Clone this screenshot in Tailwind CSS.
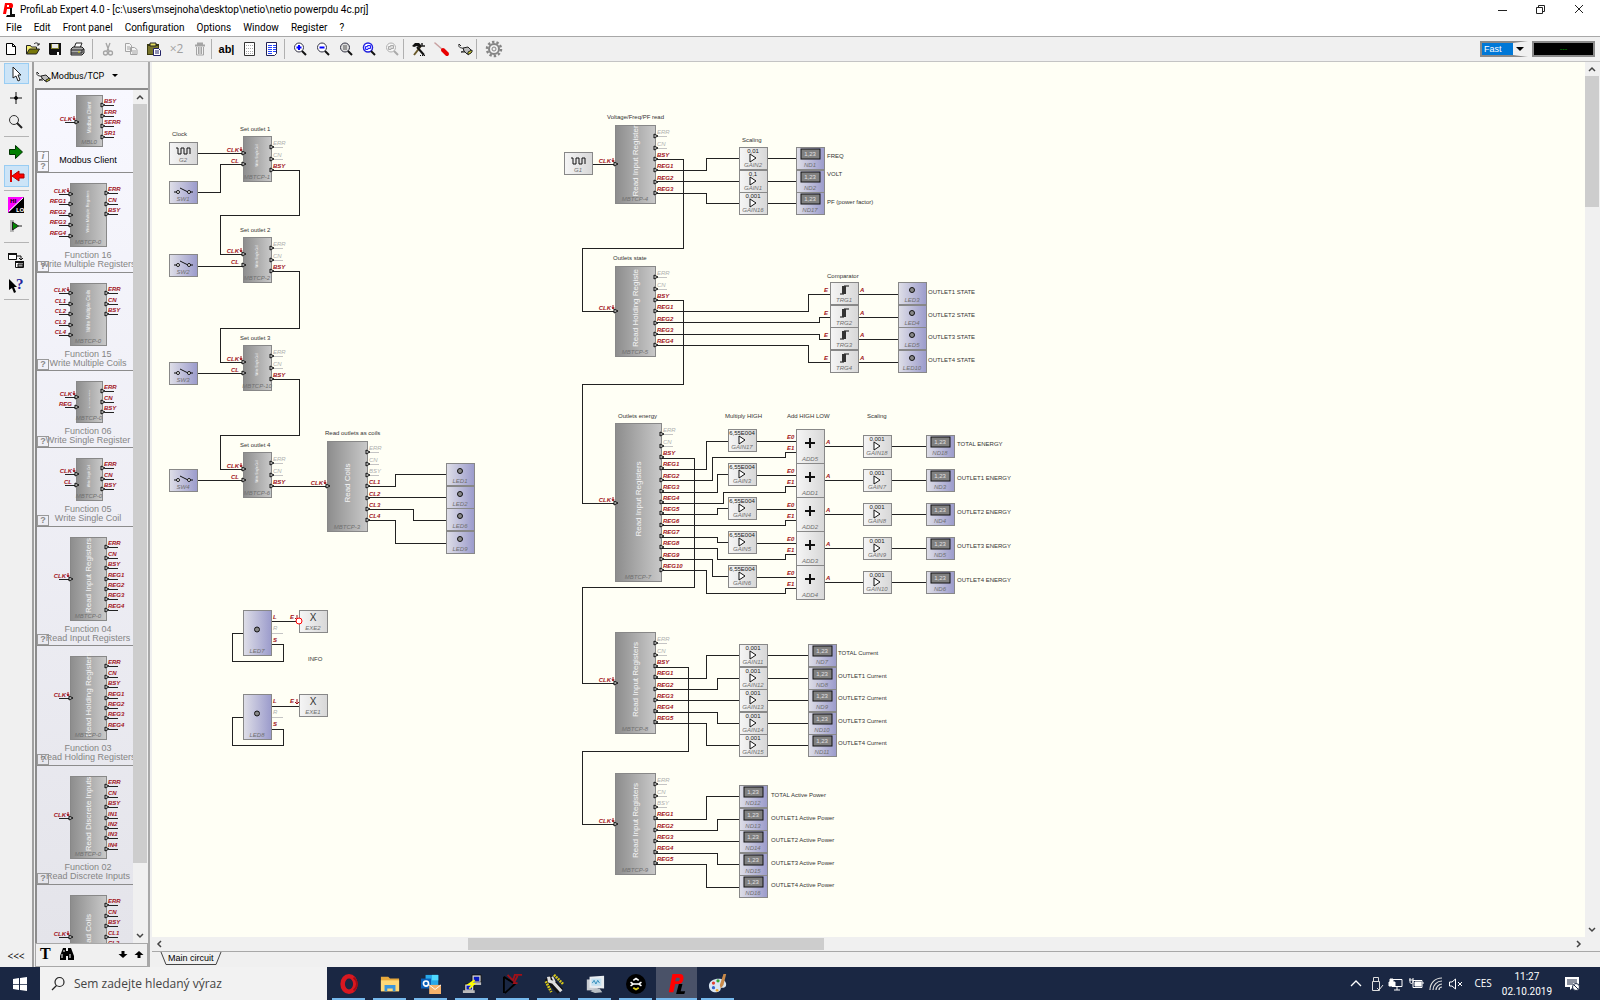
<!DOCTYPE html>
<html lang="cs">
<head>
    <meta charset="UTF-8">
    <meta name="viewport" content="width=device-width, initial-scale=1.0">
    <title>ProfiLab Expert 4.0</title>
    <script src="https://cdn.jsdelivr.net/npm/@tailwindcss/browser@4"></script>
</head>
<body class="h-screen flex flex-col overflow-hidden bg-[#f0f0f0] text-black text-xs font-['Open_Sans',sans-serif]">

    <!-- title bar -->
    <header class="bg-white h-[19px] flex items-center shrink-0">
        <svg class="w-4 h-4 ml-px" viewBox="0 0 16 16"><path fill-rule="evenodd" d="M4 1h6c3 0 3 6-1 6H6l-1 5H2zM6 3v2h2V3z" fill="#f00"/><path d="M9 6h2v6h3v3H5l1-2h3z" fill="#111"/></svg>
        <h1 class="ml-[3px] whitespace-nowrap text-[10px] font-['Roboto',sans-serif]">ProfiLab Expert 4.0 - [c:\users\msejnoha\desktop\netio\netio powerpdu 4c.prj]</h1>
        <div class="ml-auto flex">
            <button aria-label="Minimize" class="w-[38px] flex justify-center"><svg class="w-3 h-3" viewBox="0 0 12 12" fill="none" stroke="#222"><path d="M1 6.500h9"/></svg></button>
            <button aria-label="Restore" class="w-[38px] flex justify-center"><svg class="w-3 h-3" viewBox="0 0 12 12" fill="none" stroke="#222"><path d="M1.500 3.500h6v6h-6zM3.500 3.500v-2h6v6h-2"/></svg></button>
            <button aria-label="Close" class="w-[38px] mr-0.5 flex justify-center"><svg class="w-3 h-3" viewBox="0 0 12 12" fill="none" stroke="#222"><path d="M2 1l8 8M10 1l-8 8"/></svg></button>
        </div>
    </header>

    <nav class="bg-white h-[17px] flex items-center gap-3 pl-1.5 shrink-0 text-[10px] font-['Roboto',sans-serif]">
        <button>File</button><button>Edit</button><button>Front panel</button><button>Configuration</button><button>Options</button><button>Window</button><button>Register</button><button>?</button>
    </nav>

    <!-- toolbar -->
    <div class="h-[26px] flex items-center shrink-0 border-t border-[#a8a8a8] border-b border-b-[#c4c4c4]">
        <button aria-label="New" class="w-[22px] flex justify-center"><svg class="w-4 h-4" viewBox="0 0 16 16" fill="#fff" stroke="#000"><path d="M3.500 2.500h6l3 3v8h-9zM9.500 2.500v3h3"/></svg></button>
        <button aria-label="Open" class="w-[22px] flex justify-center"><svg class="w-4 h-4" viewBox="0 0 16 16" stroke="#222"><path d="M1.500 13V4.500h4l1 1.500h5v2" fill="#f4ee70"/><path d="M1.500 13l3-5h10l-3 5z" fill="#77770a"/><path d="M9 3c2-2 4-1 5 1m0-2v2h-2" fill="none"/></svg></button>
        <button aria-label="Save" class="w-[22px] flex justify-center"><svg class="w-4 h-4" viewBox="0 0 16 16"><path d="M2 2h12v12H3l-1-1z" fill="#111"/><path d="M4 3h8v5H4z" fill="#80802a"/><path d="M5 3h6v4H5z" fill="#e8e8e8"/><path d="M5 10h7v4H5z" fill="#111"/><path d="M10 11h2v3h-2z" fill="#fff"/></svg></button>
        <button aria-label="Print" class="w-[22px] flex justify-center"><svg class="w-4 h-4" viewBox="0 0 16 16" stroke="#222"><path d="M5 7l2-5h6l-2 5z" fill="#fff"/><path d="M2 8l2-2h9l2 2v4l-2 2H2z" fill="#aaa"/><path d="M2 9h11v3H2M13 9l2-1" fill="none"/><path d="M9 11h2" stroke="#dd0"/></svg></button>
        <span class="ml-1 w-1 h-5 border-l border-[#b0b0b0]"></span>
        <button aria-label="Cut" class="w-[23px] flex justify-center"><svg class="w-4 h-4" viewBox="0 0 16 16" fill="none" stroke="#a4a4a4" stroke-width="1.300"><path d="M6 2l3 8M10 2L7 10"/><circle cx="5.500" cy="12" r="2"/><circle cx="10.500" cy="12" r="2"/></svg></button>
        <button aria-label="Copy" class="w-[23px] flex justify-center"><svg class="w-4 h-4" viewBox="0 0 16 16" fill="#f4f4f4" stroke="#a4a4a4"><path d="M2.500 2.500h4l2 2v6h-6zM7.500 6.500h4l2.500 2v5h-6.500zM4 6h3M4 8h3M9 10h4M9 12h4"/></svg></button>
        <button aria-label="Paste" class="w-[23px] flex justify-center"><svg class="w-4 h-4" viewBox="0 0 16 16"><path d="M1 3h12v11H1z" fill="#3a3a10"/><path d="M2 5h10v8H2z" fill="#77742a"/><path d="M4 2h6v3H4z" fill="#e6e060" stroke="#222"/><path d="M7.500 7.500h5l2 2v5h-7z" fill="#fff" stroke="#226"/><path d="M9 10h4M9 12h4" stroke="#226"/></svg></button>
        <button class="w-[23px] text-[#a0a0a0] text-xs">×2</button>
        <button aria-label="Delete" class="w-[23px] flex justify-center"><svg class="w-4 h-4" viewBox="0 0 16 16" fill="none" stroke="#a4a4a4"><path d="M3 4.500h10M6 4V2.500h4V4" stroke-width="2"/><path d="M4.500 6v8h7V6M6.500 6v7M8 6v7M9.500 6v7"/></svg></button>
        <span class="w-1 h-5 border-l border-[#b0b0b0]"></span>
        <button class="w-[23px] font-bold text-[11px] font-['Liberation_Sans',sans-serif]">ab|</button>
        <button aria-label="Grid" class="w-[23px] flex justify-center"><svg class="w-4 h-4" viewBox="0 0 16 16"><path d="M2.500 1.500h10v13h-10z" fill="#fff" stroke="#333"/><path d="M4 4.500h8M4 7.500h8M4 10.500h8M4 12.500h8" stroke="#aaa" stroke-dasharray="1 1"/></svg></button>
        <button aria-label="Parts list" class="w-[23px] flex justify-center"><svg class="w-4 h-4" viewBox="0 0 16 16"><path d="M1.500 1.500h10v11l-2 2h-8z" fill="#fff" stroke="#225"/><path d="M3 4.500h4M8 4.500h3M3 6.500h4M8 6.500h3M3 8.500h4M8 8.500h3M3 10.500h4M8 10.500h3M3 12.500h4" stroke="#24f"/></svg></button>
        <span class="w-1 h-5 border-l border-[#b0b0b0]"></span>
        <button aria-label="Zoom in" class="w-[23px] flex justify-center"><svg class="w-4 h-4" viewBox="0 0 16 16"><circle cx="7" cy="6.500" r="4.500" fill="#fff" stroke="#334"/><path d="M10 10l4 4" stroke="#111" stroke-width="2"/><path d="M4.500 6.500h5M7 4v5" stroke="#00f" stroke-width="2"/></svg></button>
        <button aria-label="Zoom out" class="w-[23px] flex justify-center"><svg class="w-4 h-4" viewBox="0 0 16 16"><circle cx="7" cy="6.500" r="4.500" fill="#fff" stroke="#334"/><path d="M10 10l4 4" stroke="#111" stroke-width="2"/><path d="M4.500 6.500h5" stroke="#00f" stroke-width="2"/></svg></button>
        <button aria-label="Zoom page" class="w-[23px] flex justify-center"><svg class="w-4 h-4" viewBox="0 0 16 16"><circle cx="7" cy="6.500" r="4.500" fill="#ddd" stroke="#334"/><path d="M10 10l4 4" stroke="#111" stroke-width="2"/><path d="M5 4h4v5H5z" fill="#999"/></svg></button>
        <button aria-label="Zoom all" class="w-[23px] flex justify-center"><svg class="w-4 h-4" viewBox="0 0 16 16"><circle cx="7" cy="6.500" r="4.500" fill="#fff" stroke="#22d" stroke-width="1.500"/><path d="M10 10l4 4" stroke="#111" stroke-width="2"/><path d="M4.500 8.500V5.500h2V4.500h3v3H7v1z" fill="#ccf" stroke="#22f"/></svg></button>
        <button aria-label="Zoom selection" class="w-[23px] flex justify-center"><svg class="w-4 h-4" viewBox="0 0 16 16"><circle cx="7" cy="6.500" r="4.500" fill="#f6f6f6" stroke="#b0b0b0"/><path d="M10 10l4 4" stroke="#aaa" stroke-width="2"/><path d="M4.500 8.500V5.500h2V4.500h3v3H7v1z" fill="#ddd" stroke="#aaa"/></svg></button>
        <span class="w-1 h-5 border-l border-[#b0b0b0]"></span>
        <button aria-label="Compile" class="w-[23px] flex justify-center"><svg class="w-4 h-4" viewBox="0 0 16 16" fill="none"><path d="M3 14l7-9" stroke="#6a5a2a" stroke-width="2"/><path d="M1 5l3-3h4l3 3-2 2-3-2-3 1z" fill="#111"/><path d="M6 6l7 8" stroke="#111" stroke-width="2"/><path d="M11 2v3h3" stroke="#222" stroke-width="1.500"/><path d="M9 14.500h6" stroke="#111" stroke-dasharray="1 1"/></svg></button>
        <button aria-label="Configure" class="w-[23px] flex justify-center"><svg class="w-4 h-4" viewBox="0 0 16 16" fill="none" stroke-linecap="round"><path d="M1 2l8 7" stroke="#c8a0a0" stroke-width="1.500"/><path d="M9 9l4 4" stroke="#e80000" stroke-width="4"/></svg></button>
        <button aria-label="Connect" class="w-[23px] flex justify-center"><svg class="w-4 h-4" viewBox="0 0 16 16" fill="none" stroke="#222"><path d="M2 3c-1 5 3 3 5 5s-3 3-3 3h4M2 3l2 2"/><path d="M6 7l5-1 3 3v3l-4 1-3-3z" fill="#bbb"/><path d="M11 11l4-2v2l-4 3z" fill="#dd3"/></svg></button>
        <span class="w-1 h-5 border-l border-[#b0b0b0]"></span>
        <button aria-label="Settings" class="w-[28px] flex justify-center"><svg class="w-[18px] h-[18px]" viewBox="0 0 18 18" fill="none" stroke="#858585"><circle cx="9" cy="9" r="7" stroke-width="2.500" stroke-dasharray="2.400 2"/><circle cx="9" cy="9" r="5" stroke-width="2"/><circle cx="9" cy="9" r="2"/></svg></button>

        <select aria-label="Speed" class="ml-auto appearance-none w-12 h-4 px-0.5 bg-[#0078d7] text-white text-[9px] leading-none border-2 border-r-[15px] border-[#8a8a8a] border-r-[#f0f0f0] font-['Liberation_Sans',sans-serif]"><option>Fast</option></select>
        <svg class="w-2 h-1 -ml-3 mr-1 z-10" viewBox="0 0 8 4"><path d="M0 0h8L4 4z"/></svg>
        <output class="w-[63px] h-4 ml-1 mr-[5px] bg-black border-2 border-[#8a8a8a] text-[#00a000] text-[8px] leading-[10px] text-center">---</output>
    </div>

    <main class="flex flex-1 min-h-0">
        <!-- tool column -->
        <div class="w-[34px] shrink-0 flex flex-col items-center pt-px border-r-2 border-[#a0a0a0] [&_svg]:w-5 [&_svg]:h-5">
            <button aria-label="Select" class="w-[25px] h-[21px] bg-[#cce4f7] border border-[#99cdf3] flex items-center justify-center"><svg viewBox="0 0 20 20"><path d="M7 3v11l3-2 2 5 2-1-2-5h3z" fill="#fff" stroke="#222"/></svg></button>
            <button aria-label="Node" class="w-[25px] h-[28px] flex items-center justify-center"><svg viewBox="0 0 20 20" stroke="#111"><path d="M10 4v12M4 10h12"/><circle cx="10" cy="10" r="1.500"/></svg></button>
            <button aria-label="Zoom" class="w-[25px] h-[20px] flex items-center justify-center"><svg viewBox="0 0 20 20" fill="none"><circle cx="8" cy="8" r="4.500" fill="#eee" stroke="#333"/><path d="M11 11l5 5" stroke="#222" stroke-width="2"/></svg></button>
            <hr class="w-[25px] my-1 border-[#b4b4b4]">
            <button aria-label="Input" class="w-[25px] h-[21px] flex items-center justify-center"><svg viewBox="0 0 20 20"><path d="M3.500 7.500h6v-4l7 6.500-7 6.500v-4h-6z" fill="#008000" stroke="#030"/></svg></button>
            <button aria-label="Output" class="w-[25px] h-[22px] mt-[3px] bg-[#cce4f7] border border-[#99cdf3] flex items-center justify-center"><svg viewBox="0 0 20 20"><path d="M5 4v12" stroke="#d00" stroke-width="2"/><path d="M18 8h-5V5l-7 5 7 5v-3h5z" fill="#f00" stroke="#a00"/></svg></button>
            <hr class="w-[25px] my-[3px] border-[#b4b4b4]">
            <button aria-label="High low" class="w-[25px] h-[22px] flex items-center justify-center"><svg viewBox="0 0 20 20"><path d="M2 2h16L2 18z" fill="#f0f"/><path d="M18 2v16H2z" fill="#000"/><path d="M3 16L17 3" stroke="#fff"/><text x="4" y="8" font-size="6" font-weight="bold">HI</text><text x="10" y="17" font-size="6" font-weight="bold" fill="#fff">LO</text></svg></button>
            <button aria-label="Run" class="w-[25px] h-[20px] flex items-center justify-center"><svg viewBox="0 0 20 20"><path d="M4 4h4v12H4z" fill="#b8b8b8"/><path d="M6.500 6v8l6-4z" fill="#080" stroke="#222"/><path d="M12 10h4" stroke="#222"/></svg></button>
            <hr class="w-[25px] my-1.5 border-[#b4b4b4]">
            <button aria-label="Windows" class="w-[25px] h-[22px] flex items-center justify-center"><svg viewBox="0 0 20 20" fill="#fff" stroke="#111"><path d="M2.500 3.500h8v6h-8zM9.500 11.500h8v6h-8z"/><path d="M2 4h9M9 12h9" stroke-width="2"/><path d="M11 6h4v4m-2-2l2 2 2-2" fill="none"/><path d="M12 14h5v3h-5z" fill="#999"/></svg></button>
            <button aria-label="Help" class="w-[25px] h-[28px] flex items-center justify-center"><svg viewBox="0 0 20 20"><path d="M3 4v11l3-2 2 5 2-1-2-5h3z" fill="#000"/><text x="10" y="14" font-size="15" font-weight="bold" fill="#22229c" font-family="Liberation Serif">?</text></svg></button>
            <hr class="w-[25px] border-[#b4b4b4]">
            <button class="mt-auto mb-1 text-[10px]">&lt;&lt;&lt;</button>
        </div>

        <!-- parts library -->
        <aside class="w-[116px] shrink-0 flex flex-col pl-px border-r-2 border-[#a8a8a8] font-['Liberation_Sans',sans-serif]">
            <button class="h-[26px] pt-px flex items-center shrink-0 text-[9px] font-['Roboto',sans-serif]"><svg class="w-4 h-4" viewBox="0 0 16 16" fill="none" stroke="#222"><path d="M2 4c-1 5 3 3 5 5s-3 3-3 3h4M2 4l2 2"/><path d="M6 8l5-1 3 3v2l-4 1-3-3z" fill="#bbb"/><path d="M11 12l4-2v2l-4 2z" fill="#dd3"/></svg>Modbus/TCP<svg class="w-1.5 h-[3px] ml-2" viewBox="0 0 6 3"><path d="M0 0h6L3 3z"/></svg></button>
            <div class="flex flex-1 min-h-0 border-t-2 border-l-2 border-[#8c8c8c]">
                <ul id="library" class="flex-1 min-w-0 overflow-hidden bg-linear-to-b from-[#f8f8ff] to-[#e4e4ea]"></ul>
                <div class="w-[14px] mr-px flex flex-col items-center bg-[#f0f0f0]">
                    <svg class="w-2 h-[14px]" viewBox="0 0 8 14" fill="none" stroke="#444" stroke-width="1.500"><path d="M1 9l3-3 3 3"/></svg>
                    <div class="w-full h-[89%] bg-[#cdcdcd]"></div>
                    <svg class="mt-auto w-2 h-[14px]" viewBox="0 0 8 14" fill="none" stroke="#444" stroke-width="1.500"><path d="M1 5l3 3 3-3"/></svg>
                </div>
            </div>
            <div class="h-[24px] shrink-0 flex items-center pl-1 pb-0.5 border border-[#a8a8a8]">
                <button class="font-bold text-[16px] leading-none font-['Liberation_Serif',serif]">T</button>
                <button aria-label="Find" class="ml-2"><svg class="w-4 h-4" viewBox="0 0 16 16"><path d="M4 2h3v3h2V2h3l3 8v4H9v-4H7v4H1v-4z"/><path d="M3 8v4M5 4v2M11 8v4" stroke="#fff"/></svg></button>
                <button aria-label="Next" class="ml-auto"><svg class="w-4 h-4" viewBox="0 0 16 16"><path d="M6.500 5h3v3h3L8 12 3.500 8h3z"/></svg></button>
                <button aria-label="Previous"><svg class="w-4 h-4" viewBox="0 0 16 16"><path d="M6.500 12h3V9h3L8 5 3.500 9h3z"/></svg></button>
            </div>
        </aside>

        <!-- circuit -->
        <section class="flex-1 min-w-0 flex flex-col pl-0.5 bg-[#f0f0f0]">
            <div class="flex flex-1 min-h-0">
                <svg id="circuit" class="flex-1 min-w-0 h-full bg-[#fffff5] text-[6px] font-['Liberation_Sans',sans-serif]">
                    <defs>
                        <linearGradient id="dark"><stop offset="0" stop-color="#8c8c8c"/><stop offset="1" stop-color="#c8c8c8"/></linearGradient>
                        <linearGradient id="light"><stop offset="0" stop-color="#f6f6f6"/><stop offset="1" stop-color="#d8d8d8"/></linearGradient>
                        <linearGradient id="lilac"><stop offset="0" stop-color="#e0e0e8"/><stop offset="1" stop-color="#9c9ccc"/></linearGradient>
                    </defs>
                </svg>
                <div class="w-[14px] shrink-0 mr-px flex flex-col items-center">
                    <svg class="w-2 h-[14px]" viewBox="0 0 8 14" fill="none" stroke="#444" stroke-width="1.500"><path d="M1 9l3-3 3 3"/></svg>
                    <div class="w-full h-[15%] bg-[#cdcdcd]"></div>
                    <svg class="mt-auto w-2 h-[14px]" viewBox="0 0 8 14" fill="none" stroke="#444" stroke-width="1.500"><path d="M1 5l3 3 3-3"/></svg>
                </div>
            </div>
            <div class="h-[14px] shrink-0 flex items-center pr-3.5">
                <svg class="w-[14px] h-2" viewBox="0 0 14 8" fill="none" stroke="#444" stroke-width="1.500"><path d="M9 1L6 4l3 3"/></svg>
                <div class="flex-1 h-3"><div class="ml-[21.5%] w-[25.3%] h-full bg-[#cdcdcd]"></div></div>
                <svg class="w-[14px] h-2" viewBox="0 0 14 8" fill="none" stroke="#444" stroke-width="1.500"><path d="M5 1l3 3-3 3"/></svg>
            </div>
            <div class="h-[16px] shrink-0 border-t border-[#a8a8a8] pl-2 flex">
                <svg class="w-2 h-[13px]" viewBox="0 0 8 13" fill="none" stroke="#444"><path d="M1 0l5 12.500h2"/></svg>
                <button class="h-[13px] border-b border-[#444] text-[9px] leading-none font-['Liberation_Sans',sans-serif]">Main circuit</button>
                <svg class="w-2 h-[13px]" viewBox="0 0 8 13" fill="none" stroke="#444"><path d="M0 12.500h2L7 0"/></svg>
            </div>
        </section>
    </main>

    <!-- taskbar -->
    <footer class="h-[33px] shrink-0 flex bg-[#1a2743] text-white [&_button]:shrink-0">
        <button aria-label="Start" class="w-10 flex items-center justify-center"><svg class="w-[14px] h-[14px]" viewBox="0 0 14 14" fill="#fff"><path d="M0 2l6-1v6H0zM7 1l7-1v7H7zM0 7.700h6v5.300l-6-1zM7 7.700h7V14l-7-1z"/></svg></button>
        <label class="w-[287px] bg-[#f2f2f2] flex items-center pl-2.5 text-[#444]">
            <svg class="w-4 h-4 mr-2" viewBox="0 0 16 16" fill="none" stroke="#222" stroke-width="1.200"><circle cx="9.500" cy="6" r="4.500"/><path d="M6.500 9.500L2 14"/></svg>
            <input type="text" aria-label="Hledat" placeholder="Sem zadejte hledaný výraz" class="flex-1 min-w-0 text-[12px] placeholder:text-[#444] outline-none">
        </label>
        <div class="flex pl-px [&>button]:w-[33px] [&>button]:mx-1 [&>button]:flex [&>button]:justify-center [&>button]:items-center [&_svg]:w-5 [&_svg]:h-5">
            <button aria-label="Opera" class="shadow-[inset_0_-2px_#76b9ed]"><svg viewBox="0 0 22 22"><ellipse cx="11" cy="11" rx="7" ry="8.500" fill="none" stroke="#d81820" stroke-width="5"/><path d="M16 4c5 4 5 10 0 14" stroke="#a00c14" stroke-width="2" fill="none"/></svg></button>
            <button aria-label="Explorer" class="shadow-[inset_0_-2px_#76b9ed]"><svg viewBox="0 0 22 22"><path d="M1 3h8l2 2h10v14H1z" fill="#e8a93c"/><path d="M1 7h20v12H1z" fill="#ffd978"/><path d="M5 12h12v7h-3v-3H8v3H5z" fill="#3a96dd"/></svg></button>
            <button aria-label="Outlook" class="shadow-[inset_0_-2px_#76b9ed]"><svg viewBox="0 0 22 22"><path d="M5 1h14v14H5z" fill="#28a8ea"/><path d="M12 1h7v6h-7z" fill="#50d9ff"/><path d="M0 5h11v11H0z" fill="#0a5fb8"/><circle cx="5.500" cy="10.500" r="2.800" fill="none" stroke="#fff" stroke-width="1.800"/><path d="M9 12h13v10H9z" fill="#f6b26b"/><path d="M9 12l6.500 5 6.500-5" fill="none" stroke="#fff"/></svg></button>
            <button aria-label="PuTTY" class="shadow-[inset_0_-2px_#76b9ed]"><svg viewBox="0 0 22 22"><path d="M11 1h10v8H11zM3 11h10v8H3z" fill="#d0d0d0" stroke="#111"/><path d="M13 3h6v5h-6zM5 13h6v4H5z" fill="#0818c0"/><path d="M1 18h13v3H1zM10 9h11v3H10z" fill="#bbb"/><path d="M14 7l-6 4h5l-5 5" stroke="#ff0" stroke-width="2" fill="none"/></svg></button>
            <button aria-label="PCB" class="shadow-[inset_0_-2px_#76b9ed]"><svg viewBox="0 0 22 22" fill="none"><path d="M1 3v18M1 3l12 8L2 21" stroke="#000" stroke-width="2"/><path d="M5 1l6 6 2-6h8M16 2l-4 8h4" stroke="#a01018" stroke-width="2"/></svg></button>
            <button aria-label="Tools" class="shadow-[inset_0_-2px_#76b9ed]"><svg viewBox="0 0 22 22" fill="none"><path d="M4 4l14 15" stroke="#111" stroke-width="8"/><path d="M2 8l6 12M11 1l10 10" stroke="#d8c818" stroke-width="3" stroke-dasharray="2 1"/><path d="M5 3l1 5 4 1 9 10" stroke="#ddd" stroke-width="3.500"/><path d="M9 3l3 6" stroke="#ddd" stroke-width="2"/></svg></button>
            <button aria-label="Monitor" class="shadow-[inset_0_-2px_#76b9ed]"><svg viewBox="0 0 22 22"><path d="M2 6h12v12H2z" fill="#c8ccd2"/><path d="M5 3l16-1v14l-16-1z" fill="#e8ecf0"/><path d="M7 5h11v8H7z" fill="#c4e0f0"/><path d="M8 10l2-3 2 4 2-4 2 3" fill="none" stroke="#2888b8"/><path d="M11 16h5l3 4-8 1-5-2z" fill="#b8bec4"/></svg></button>
            <button aria-label="NETIO" class="shadow-[inset_0_-2px_#76b9ed]"><svg viewBox="0 0 22 22"><circle cx="11" cy="11" r="11"/><path d="M8 7l3-2 3 2M5 9l3 2-3 2M17 9l-3 2 3 2M9 11h4" fill="none" stroke="#fff" stroke-width="1.800"/><path d="M8 15l3 2 3-2" fill="none" stroke="#e0d020" stroke-width="2"/></svg></button>
            <button aria-label="ProfiLab" class="mx-0! w-[41px]! bg-[#4a5268] shadow-[inset_0_-2px_#76b9ed]"><svg viewBox="0 0 22 22"><path d="M13 11h4l-2 8h5l-1 3h-9z" fill="#000"/><path fill-rule="evenodd" d="M6 0h9c5 0 4 11-2 11H9L7 20H2zM10 4L9 8h3c2 0 3-4 1-4z" fill="#f00"/></svg></button>
            <button aria-label="Paint" class="shadow-[inset_0_-2px_#76b9ed]"><svg viewBox="0 0 22 22"><path d="M1 13c0-9 18-11 19-2 0 6-5 3-6 5 0 6-13 6-13-3z" fill="#d8e6f2"/><circle cx="6" cy="10" r="1.800" fill="#e04030"/><circle cx="11" cy="7.500" r="1.800" fill="#3a3"/><circle cx="6" cy="15" r="1.800" fill="#36c"/><circle cx="10" cy="18" r="1.500" fill="#ea3"/><path d="M20 0l-3 12-3 4-1-4 4-12z" fill="#c98a4a"/></svg></button>
        </div>
        <div class="ml-auto flex items-center gap-1 text-[10px]">
            <svg class="w-4 h-4" viewBox="0 0 16 16" fill="none" stroke="#fff" stroke-width="1.300"><path d="M3 10l5-5 5 5"/></svg>
            <svg class="w-4 h-4" viewBox="0 0 16 16" fill="none" stroke="#ddd"><path d="M5.500 5V1.500h5V5M4.500 5.500h7v9h-7z"/><path d="M9 12l2 2 4-5"/></svg>
            <svg class="w-4 h-4" viewBox="0 0 16 16" fill="none" stroke="#fff"><path d="M4 3.500h10v7H4M9 11v3M6 14h6"/><path d="M1 6h6v4H1zM2 3h3v3H2z" fill="#fff"/></svg>
            <svg class="w-4 h-4" viewBox="0 0 16 16" fill="none" stroke="#fff"><path d="M5 4.500h9v7H5zM14 7h2M1 4h4M2 2v4c0 2 3 2 3 0V2"/><path d="M7 6h6v4H7z" fill="#fff"/></svg>
            <svg class="w-4 h-4" viewBox="0 0 16 16" fill="none" stroke="#ddd" stroke-width="1.200"><path d="M2 14C2 7 7 2 14 2M5 14c0-5 4-9 9-9M8 14c0-3 3-6 6-6M11 14c0-2 1-3 3-3"/></svg>
            <svg class="w-4 h-4" viewBox="0 0 16 16" fill="none" stroke="#fff"><path d="M1.500 6v4H4l3.500 3V3L4 6zM10 6l4 4M14 6l-4 4"/></svg>
            <span class="ml-1.5">CES</span>
            <time class="ml-1.5 text-center leading-[15px] font-['Roboto',sans-serif]">11:27<br>02.10.2019</time>
            <svg class="w-4 h-4 ml-2 mr-5" viewBox="0 0 16 16"><path d="M1 1h14v10H9l-3 3v-3H1z" fill="#fff"/><path d="M3 4h10M3 6h10M3 8h6" stroke="#1a2743"/><circle cx="12" cy="11" r="3.500" fill="#fff" stroke="#1a2743"/><path d="M10 9l4 4" stroke="#1a2743"/></svg>
        </div>
    </footer>

    <script>
        const RED = '#a01018';
        const GREY = '#c4c4c4';

        const text = (x, y, s, o = '') => `<text x="${x}" y="${y}" ${o}>${s}</text>`;
        const wire = (d, c = '#222') => `<path d="${d}" fill="none" stroke="${c}" shape-rendering="crispEdges"/>`;
        const tri = (x, y) => `<path d="M${x} ${y - 2}l4 2-4 2z" fill="#ccc" stroke="#111"/>`;
        const box = (x, y, w, h, fill) => `<rect x="${x}" y="${y}" width="${w}" height="${h}" fill="url(#${fill})" stroke="#888" shape-rendering="crispEdges"/>`;
        const idText = (x, y, s) => text(x, y, s, 'text-anchor="middle" font-style="italic" fill="#707070"');
        const pin = (x, y, s, c = RED, a = 'start') => text(x, y, s, `fill="${c}" font-style="italic" font-weight="${c === RED ? 'bold' : 'normal'}" text-anchor="${a}"`);

        // Modbus block: inputs left, outputs right, caption turned by 90 degrees
        function block(x, y, w, h, id, caption, size, inputs, outputs, unused = 2, stubs = false, pitch = 11.3) {
            let s = box(x, y, w, h, 'dark');
            const cx = x + w / 2, ty = y + (h - 6) / 2;
            s += text(0, 0, caption, `transform="translate(${cx + size / 3} ${ty}) rotate(-90)" text-anchor="middle" fill="#f4f4f4" font-size="${size}"`);
            s += idText(cx, y + h - 2, id);
            inputs.forEach(([label, py]) => {
                if (stubs) s += wire(`M${x - 11} ${py}H${x}`);
                s += tri(x - 1, py) + pin(x - 4, py - 1, label, RED, 'end');
                if (label === 'CLK') s += `<path d="M${x - 2} ${py - 6}v4m-1-2l1 2 1-2" stroke="${RED}" fill="none"/>`;
            });
            outputs.forEach((label, i) => {
                const py = Math.round(y + pitch * (i + 1));
                const off = i < unused;
                if (off || stubs) s += wire(`M${x + w + 3} ${py}h9`, off ? GREY : '#222');
                s += tri(x + w - 1, py) + pin(x + w + 2, py - 2, label, off ? '#b0b0b0' : RED);
            });
            return s;
        }

        const gain = (x, y, value, id) => box(x, y, 28, 22, 'light') + text(x + 14, y + 6, value, 'text-anchor="middle" fill="#222"')
            + `<path d="M${x + 11} ${y + 7}l6 4-6 4z" fill="#fff" stroke="#111"/>` + idText(x + 14, y + 20, id);
        const display = (x, y, id) => box(x, y, 28, 22, 'lilac') + `<rect x="${x + 5}" y="${y + 2}" width="19" height="10" fill="#808080" stroke="#111"/>`
            + text(x + 14, y + 9, '1,23', 'text-anchor="middle" fill="#e0e0e0"') + idText(x + 14, y + 20, id);
        const led = (x, y, id, h = 22) => box(x, y, 28, h, 'lilac') + `<circle cx="${x + 14}" cy="${y + h / 2 - 3}" r="2.500" fill="#888" stroke="#111"/>` + idText(x + 14, y + h - 2, id);
        const clock = (x, y, id) => box(x, y, 28, 22, 'light') + `<path d="M${x + 7} ${y + 6}h2v6h3v-6h3v6h3v-6h3v6" fill="none" stroke="#111"/>` + idText(x + 14, y + 20, id);
        const sw = (x, y, id) => box(x, y, 28, 22, 'lilac')
            + `<path d="M${x + 5} ${y + 11}h3m3-4l8 4m2 0h3" stroke="#111"/><g fill="#fff" stroke="#111"><circle cx="${x + 9}" cy="${y + 11}" r="1.500"/><circle cx="${x + 20}" cy="${y + 11}" r="1.500"/></g>` + idText(x + 14, y + 20, id);
        const trigger = (x, y, id) => box(x, y, 28, 22, 'light') + `<path d="M${x + 10} ${y + 12}h4v-8h5" fill="none" stroke="#111"/><path d="M${x + 12} ${y + 4}h4v8h-4z"/>` + idText(x + 14, y + 20, id);
        const adder = (x, y, id) => box(x, y, 28, 34, 'light') + `<path d="M${x + 9} ${y + 14}h10M${x + 14} ${y + 9}v10" stroke="#111" stroke-width="2"/>` + idText(x + 14, y + 32, id);
        const exe = (x, y, id) => box(x, y, 28, 22, 'light') + text(x + 14, y + 11, 'X', 'text-anchor="middle" font-size="10" fill="#333"') + idText(x + 14, y + 20, id);

        const regs = n => ['ERR', 'CN', 'BSY', ...Array.from({ length: n }, (_, i) => 'REG' + (i + 1))];
        let g = '';

        // wires
        g += [
            'M198 153H243', 'M198 192H220V164H243', 'M272 170H299V215H220V254H243',
            'M198 266H243', 'M272 271H299V328H220V362H243',
            'M198 373H243', 'M272 379H299V435H220V469H243',
            'M198 480H243', 'M272 486H327',
            'M368 486H395V474H446', 'M368 497H446', 'M368 509H413V520H446', 'M368 520H395V543H446',
            'M593 164H615', 'M656 159H683V248H582V311H615',
            'M656 170H706V158H739', 'M656 181H739', 'M656 193H706V203H739',
            'M767 158H796', 'M767 181H796', 'M767 203H796',
            'M656 300H683V384H582V503H615',
            'M656 311H808V294H830', 'M656 322H819V317H830', 'M656 334H819V339H830', 'M656 345H808V362H830',
            'M858 294H898', 'M858 317H898', 'M858 339H898', 'M858 362H898',
            'M662 458H694V587H582V683H615',
            'M662 469H706V441H728', 'M662 480H712V457H785V452H796', 'M662 492H717V474H728', 'M662 503H723V492H785V486H796',
            'M662 514H717V508H728', 'M662 525H785V520H796', 'M662 537H717V542H728', 'M662 548H717V559H785V554H796',
            'M662 559H712V576H728', 'M662 570H706V593H785V588H796',
            'M656 667H688V751H582V824H615',
            'M656 678H706V655H739', 'M656 689H717V678H739', 'M656 700H739', 'M656 712H717V723H739', 'M656 723H706V745H739',
            'M656 819H706V796H739', 'M656 830H717V819H739', 'M656 841H739', 'M656 853H717V864H739', 'M656 864H706V887H739',
            'M271 621H299', 'M271 644H283V661H232V633H243', 'M271 706H299', 'M271 729H283V745H232V717H243'
        ].map(d => wire(d)).join('');

        // outlet switches
        g += clock(169, 142, 'G2');
        [[136, 181, 'MBTCP-1'], [237, 254, 'MBTCP-2'], [345, 362, 'MBTCP-10'], [452, 469, 'MBTCP-6']].forEach(([y, sy, id], i) => {
            g += sw(169, sy, 'SW' + (i + 1));
            g += block(243, y, 28, 45, id, 'Write Single Coil', 3, [['CLK', y + 17], ['CL', y + 28]], ['ERR', 'CN', 'BSY']);
            g += text(240, y - 5, 'Set outlet ' + (i + 1));
        });
        g += block(327, 441, 40, 90, 'MBTCP-3', 'Read Coils', 8, [['CLK', 486]], ['ERR', 'CN', 'BSY', 'CL1', 'CL2', 'CL3', 'CL4'], 3);
        ['LED1', 'LED2', 'LED6', 'LED9'].forEach((id, i) => g += led(446, Math.round(463 + i * 22.6), id));

        // voltage, frequency, power factor
        g += clock(564, 152, 'G1');
        g += block(615, 125, 40, 78, 'MBTCP-4', 'Read Input Register', 8, [['CLK', 164]], regs(3));
        [['0,01', 'GAIN2', 'ND1'], ['0,1', 'GAIN1', 'ND2'], ['0,001', 'GAIN16', 'ND17']].forEach(([v, a, b], i) => {
            const y = Math.round(147 + i * 22.6);
            g += gain(739, y, v, a) + display(796, y, b);
        });

        // outlet states
        g += block(615, 266, 40, 90, 'MBTCP-5', 'Read Holding Registe', 8, [['CLK', 311]], regs(4));
        ['LED3', 'LED4', 'LED5', 'LED10'].forEach((id, i) => {
            const y = Math.round(282 + i * 22.6);
            g += trigger(830, y, 'TRG' + (i + 1)) + led(898, y, id);
            g += pin(824, y + 10, 'E') + pin(860, y + 10, 'A') + text(928, y + 12, `OUTLET${i + 1} STATE`);
        });

        // energy
        g += block(615, 423, 46, 158, 'MBTCP-7', 'Read Input Registers', 8, [['CLK', 503]], regs(10));
        [['GAIN17', 'ADD5', 'GAIN18', 'ND18', 'TOTAL'], ['GAIN3', 'ADD1', 'GAIN7', 'ND3', 'OUTLET1'], ['GAIN4', 'ADD2', 'GAIN8', 'ND4', 'OUTLET2'],
         ['GAIN5', 'ADD3', 'GAIN9', 'ND5', 'OUTLET3'], ['GAIN6', 'ADD4', 'GAIN10', 'ND6', 'OUTLET4']].forEach(([a, b, c, d, name], i) => {
            const y = 429 + i * 34;
            g += wire(`M757 ${y + 12}H796M824 ${y + 17}H863M892 ${y + 17}H926`);
            g += gain(728, y, '6,55E004', a) + adder(796, y, b) + gain(863, y + 6, '0,001', c) + display(926, y + 6, d);
            g += pin(787, y + 10, 'E0') + pin(787, y + 21, 'E1') + pin(826, y + 15, 'A') + text(957, y + 17, name + ' ENERGY');
        });

        // current and active power
        g += block(615, 632, 40, 101, 'MBTCP-8', 'Read Input Registers', 8, [['CLK', 683]], regs(5));
        g += block(615, 773, 40, 101, 'MBTCP-9', 'Read Input Registers', 8, [['CLK', 824]], regs(5), 3);
        ['TOTAL', 'OUTLET1', 'OUTLET2', 'OUTLET3', 'OUTLET4'].forEach((name, i) => {
            const y = Math.round(644 + i * 22.6), py = y + 141;
            g += wire(`M767 ${y + 11}H808`) + gain(739, y, '0,001', 'GAIN' + (11 + i)) + display(808, y, 'ND' + (7 + i)) + text(838, y + 11, name + ' Current');
            g += display(739, py, 'ND' + (12 + i)) + text(771, py + 12, name + ' Active Power');
        });

        // info
        [[610, 'LED7', 'EXE2'], [694, 'LED8', 'EXE1']].forEach(([y, a, b]) => {
            g += led(243, y, a, 45) + exe(299, y, b) + wire(`M272 ${y + 23}h11`, GREY);
            g += pin(273, y + 9, 'L') + pin(273, y + 20, 'R', '#b0b0b0') + pin(273, y + 32, 'S') + pin(290, y + 9, 'E');
            g += `<path d="M297 ${y + 5}v5m-2-2l2 2 2-2" fill="none" stroke="${RED}"/>`;
        });
        g += '<circle cx="299" cy="621" r="3" fill="#fff" stroke="#f00"/>';

        [[172, 136, 'Clock'], [607, 119, 'Voltage/Freq/PF read'], [742, 142, 'Scaling'], [827, 158, 'FREQ'], [827, 176, 'VOLT'], [827, 204, 'PF (power factor)'],
         [613, 260, 'Outlets state'], [827, 278, 'Comparator'], [618, 418, 'Outlets energy'], [725, 418, 'Multiply HIGH'], [787, 418, 'Add HIGH LOW'],
         [867, 418, 'Scaling'], [325, 435, 'Read outlets as coils'], [308, 661, 'INFO']].forEach(([x, y, s]) => g += text(x, y, s));

        document.getElementById('circuit').insertAdjacentHTML('beforeend', `<g transform="translate(-152 -62)" fill="#333">${g}</g>`);

        // library: name lines, item height, block x/width/height, caption, size, inputs, outputs
        const parts = [
            [['Modbus Client'], 83, 39, 26, 51, 'Modbus Client', 5, [['CLK', 32]], ['BSY', 'ERR', 'SERR', 'SR1'], 'MBL0'],
            [['Function 16', 'Write Multiple Registers'], 100, 33, 36, 63, 'Write Multiple Registers', 4, [['CLK', 21], ['REG1', 31], ['REG2', 42], ['REG3', 52], ['REG4', 63]], ['ERR', 'CN', 'BSY']],
            [['Function 15', 'Write Multiple Coils'], 98, 33, 36, 62, 'Write Multiple Coils', 5, [['CLK', 20], ['CL1', 31], ['CL2', 41], ['CL3', 52], ['CL4', 62]], ['ERR', 'CN', 'BSY']],
            [['Function 06', 'Write Single Register'], 77, 39, 26, 41, 'Write Single Register', 2, [['CLK', 26], ['REG', 36]], ['ERR', 'CN', 'BSY']],
            [['Function 05', 'Write Single Coil'], 79, 39, 26, 42, 'Write Single Coil', 3, [['CLK', 26], ['CL', 37]], ['ERR', 'CN', 'BSY']],
            [['Function 04', 'Read Input Registers'], 119, 33, 36, 83, 'Read Input Registers', 8, [['CLK', 52]], regs(4)],
            [['Function 03', 'Read Holding Registers'], 120, 33, 36, 83, 'Read Holding Registers', 8, [['CLK', 52]], regs(4)],
            [['Function 02', 'Read Discrete Inputs'], 119, 33, 36, 82, 'Read Discrete Inputs', 8, [['CLK', 52]], ['ERR', 'CN', 'BSY', 'IN1', 'IN2', 'IN3', 'IN4']],
            [['Function 01', 'Read Coils'], 119, 33, 36, 83, 'Read Coils', 8, [['CLK', 52]], ['ERR', 'CN', 'BSY', 'CL1', 'CL2', 'CL3', 'CL4']]
        ];
        document.getElementById('library').innerHTML = parts.map(([name, height, x, w, h, caption, size, ins, outs, id = 'MBTCP-0'], i) => `
            <li class="relative flex flex-col items-center border-b border-[#8c8c8c] whitespace-nowrap text-[9px] leading-[9px] ${i ? 'text-[#858585]' : 'text-black'}" style="height:${height}px">
                <svg class="w-full shrink-0 text-[6px]" style="height:${15 + h}px">${block(x, i ? 10 : 5, w, h, id, caption, size, ins, outs, 0, true, 10.4)}</svg>
                ${name.map(n => `<span class="ml-1.5">${n}</span>`).join('')}
                <span class="absolute left-0 bottom-0 w-3 border border-[#999] text-center font-bold text-[#888]">${i ? '' : '<i class="block border-b border-[#999]">i</i>'}?</span>
            </li>`).join('');
    </script>
</body>
</html>
